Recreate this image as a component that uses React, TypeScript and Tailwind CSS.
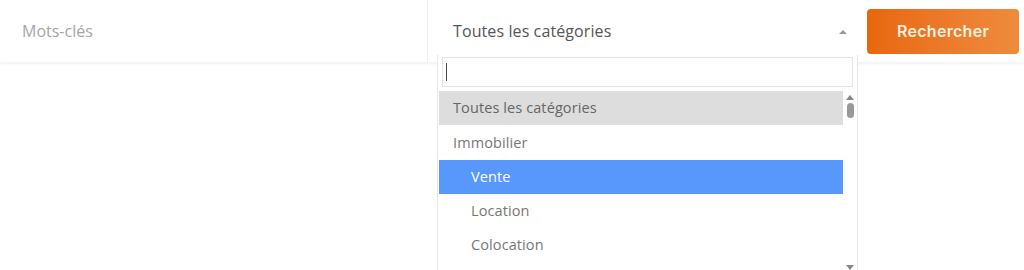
const options = [
  { label: 'Toutes les catégories', level: 0, state: 'selected' },
  { label: 'Immobilier', level: 0, state: '' },
  { label: 'Vente', level: 1, state: 'active' },
  { label: 'Location', level: 1, state: '' },
  { label: 'Colocation', level: 1, state: '' },
];

export default function App() {
  return (
    <div className="h-[270px] w-[1024px] overflow-hidden bg-white font-['Open_Sans',sans-serif]">
      <div className="relative flex h-[62px] items-center bg-white shadow-[0_2px_3px_rgba(0,0,0,0.05)]">
        <div className="flex h-full w-[428px] items-center border-r border-[#eee] pl-[22px] text-[16px] text-[#a6a6a6]">
          Mots-clés
        </div>
        <div className="relative flex h-full w-[430px] items-center pl-[25px] text-[16px] tracking-[0.1px] text-[#555]">
          Toutes les catégories
          <span className="absolute left-[411px] top-[30px] h-0 w-0 border-x-[4px] border-b-[4px] border-x-transparent border-b-[#999]" />

          <div className="absolute left-[9px] top-[55px] z-10 w-[421px] border border-t-0 border-[#e6e6e6] bg-white">
            <div className="px-[4px] pb-[4px] pt-[2px]">
              <div className="flex h-[30px] items-center border border-[#e5e5e5] pl-[3px]">
                <span className="h-[18px] w-px bg-[#444]" />
              </div>
            </div>
            <div className="flex h-[180px]">
              <ul className="w-[406px] pl-px">
                {options.map((o) => (
                  <li
                    key={o.label}
                    className={
                      'flex h-[34.3px] items-center text-[14.5px] ' +
                      (o.level === 1 ? 'pl-[32px] ' : 'pl-[14px] ') +
                      (o.state === 'selected'
                        ? 'bg-[#ddd] text-[#666]'
                        : o.state === 'active'
                          ? 'bg-[#5897fb] font-medium text-white'
                          : 'text-[#777]')
                    }
                  >
                    {o.label}
                  </li>
                ))}
              </ul>
              <div className="flex w-[14px] flex-col items-center pt-[4px]">
                <span className="h-0 w-0 border-x-[4px] border-b-[5px] border-x-transparent border-b-[#888]" />
                <span className="mt-[3px] h-[15px] w-[7px] rounded-full bg-[#999]" />
                <span className="mt-auto mb-[1px] h-0 w-0 border-x-[4px] border-t-[5px] border-x-transparent border-t-[#888]" />
              </div>
            </div>
          </div>
        </div>
        <button className="ml-[9px] h-[45px] w-[152px] rounded-[4px] bg-gradient-to-r from-[#e8670b] to-[#ef8b3c] font-['Inter',sans-serif] text-[16px] font-semibold tracking-[0.3px] text-[#fdeede]">
          Rechercher
        </button>
      </div>
    </div>
  );
}
